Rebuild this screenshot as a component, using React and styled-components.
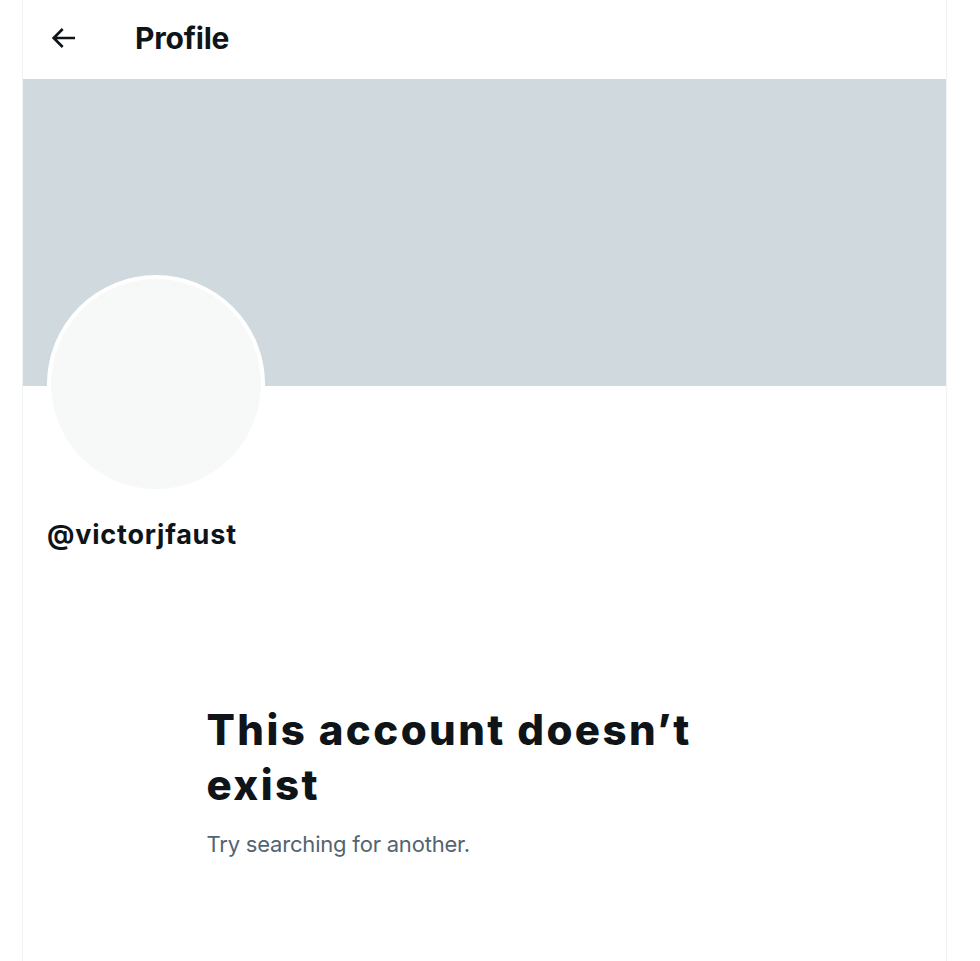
import React from "react";
import styled, { createGlobalStyle } from "styled-components";

const GlobalStyle = createGlobalStyle`
  html, body {
    margin: 0;
    padding: 0;
    background: #ffffff;
    font-family: Inter, "Noto Sans", "Liberation Sans", sans-serif;
    color: #0f1419;
  }
  * { box-sizing: border-box; }
`;

const Page = styled.div`
  display: flex;
  justify-content: flex-start;
  padding-left: 22px;
  min-height: 961px;
  background: #ffffff;
`;

const Column = styled.main`
  width: 925px;
  min-height: 961px;
  border-left: 1px solid #eff3f4;
  border-right: 1px solid #eff3f4;
  display: flex;
  flex-direction: column;
`;

const Header = styled.header`
  height: 79px;
  display: flex;
  align-items: center;
  padding: 0 0 4px 24px;
  gap: 56px;
`;

const BackButton = styled.button`
  border: none;
  background: transparent;
  padding: 0;
  width: 32px;
  height: 32px;
  display: flex;
  align-items: center;
  justify-content: center;
  color: #0f1419;
  cursor: pointer;
`;

const Title = styled.h1`
  margin: 0;
  font-size: 30px;
  font-weight: 700;
  letter-spacing: -0.2px;
  line-height: 36px;
`;

const Banner = styled.div`
  height: 307px;
  background: #cfd9de;
`;

const Avatar = styled.div`
  width: 218px;
  height: 218px;
  margin: -111px 0 0 24px;
  border-radius: 50%;
  border: 4px solid #ffffff;
  background: #f7f9f9;
`;

const Handle = styled.div`
  margin: 27px 0 0 24px;
  font-size: 27px;
  font-weight: 700;
  line-height: 30px;
  letter-spacing: 0.8px;
`;

const Empty = styled.section`
  width: 556px;
  margin: 152px auto 0;
  display: flex;
  flex-direction: column;
  gap: 18px;
`;

const EmptyTitle = styled.h2`
  margin: 0;
  font-size: 42px;
  line-height: 55px;
  font-weight: 800;
  letter-spacing: 2.4px;
  color: #0f1419;
`;

const EmptyText = styled.p`
  margin: 0;
  font-size: 22px;
  line-height: 28px;
  font-weight: 400;
  letter-spacing: -0.2px;
  color: #536471;
`;

const BackIcon = () => (
  <svg width="32" height="32" viewBox="0 0 24 24" fill="currentColor" aria-hidden="true">
    <path d="M7.414 13l5.043 5.04-1.414 1.42L3.586 12l7.457-7.46 1.414 1.42L7.414 11H21v2H7.414z" />
  </svg>
);

export default function App() {
  return (
    <>
      <GlobalStyle />
      <Page>
        <Column>
          <Header>
            <BackButton aria-label="Back">
              <BackIcon />
            </BackButton>
            <Title>Profile</Title>
          </Header>
          <Banner />
          <Avatar />
          <Handle>@victorjfaust</Handle>
          <Empty>
            <EmptyTitle>This account doesn’t exist</EmptyTitle>
            <EmptyText>Try searching for another.</EmptyText>
          </Empty>
        </Column>
      </Page>
    </>
  );
}
